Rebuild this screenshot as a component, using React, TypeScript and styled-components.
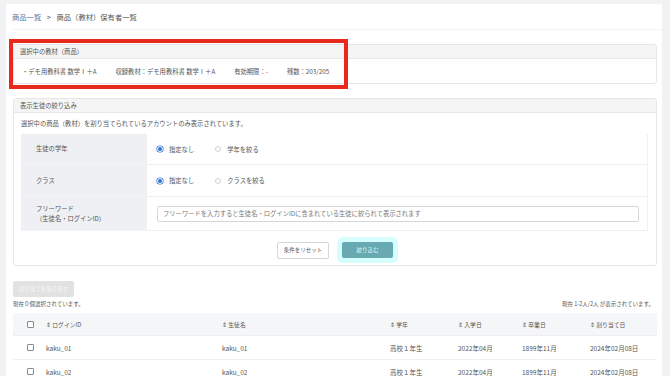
import styled, { createGlobalStyle } from 'styled-components';

const GlobalStyle = createGlobalStyle`
  *, *::before, *::after {
    box-sizing: border-box;
  }
  html, body {
    margin: 0;
    padding: 0;
    background: #f1f2f4;
    font-family: "Noto Sans CJK JP", "Noto Sans", sans-serif;
    color: #555;
    overflow: hidden;
  }
`;

const Page = styled.div`
  padding: 4px 8px 0 6px;
  height: 376px;
`;

const Panel = styled.div`
  background: #fff;
  height: 100%;
  padding: 0 5px 0 7px;
  position: relative;
`;

const Breadcrumb = styled.div`
  height: 26px;
  display: flex;
  align-items: center;
  gap: 4px;
  font-size: 7.3px;
  color: #555;
  margin: 0 -5px 0 -1px;
  border-bottom: 1px solid #f4f4f4;
`;

const Crumb = styled.span<{ link?: boolean }>`
  color: ${p => (p.link ? '#5a78a0' : '#555')};
`;

const Card = styled.div<{ top: number }>`
  margin-top: ${p => p.top}px;
  border: 1px solid #e6e6e6;
  border-radius: 3px;
  background: #fff;
  overflow: hidden;
`;

const CardHeader = styled.div`
  height: 14px;
  background: #f5f5f5;
  border-bottom: 1px solid #e8e8e8;
  display: flex;
  align-items: center;
  padding-left: 6px;
  font-size: 6.3px;
  color: #555;
`;

const InfoBody = styled.div`
  height: 24px;
  display: flex;
  align-items: center;
  gap: 19px;
  padding-left: 8px;
  font-size: 6.3px;
  color: #555;
`;

const Highlight = styled.div`
  position: absolute;
  left: 3px;
  top: 35px;
  width: 339px;
  height: 50px;
  border: 4px solid #e8291b;
  pointer-events: none;
`;

const Description = styled.div`
  height: 21px;
  display: flex;
  align-items: center;
  padding-left: 7px;
  font-size: 6.3px;
`;

const FormTable = styled.div`
  margin: 0 8px 0 7px;
  display: grid;
  grid-template-columns: 126px 1fr;
`;

const LabelCell = styled.div<{ h: number }>`
  height: ${p => p.h}px;
  background: #eef0f4;
  display: flex;
  flex-direction: column;
  justify-content: center;
  padding-left: 15px;
  font-size: 6.3px;
  color: #555;
  line-height: 1.5;
  border-bottom: 1px solid #f3f4f6;
`;

const ValueCell = styled.div<{ h: number }>`
  height: ${p => p.h}px;
  display: flex;
  align-items: center;
  padding-left: 10px;
  padding-right: 8px;
  border-bottom: 1px solid #eeeff2;
  border-right: 1px solid #f1f1f3;
  gap: 21px;
  font-size: 6.3px;
`;

const Radio = styled.label`
  display: flex;
  align-items: center;
  gap: 6px;
`;

const RadioDot = styled.span<{ checked?: boolean }>`
  width: 6px;
  height: 6px;
  border-radius: 50%;
  border: ${p => (p.checked ? '1.5px solid #fff' : '1px solid #cfd3d8')};
  background: ${p => (p.checked ? '#2f6ed1' : '#fff')};
  box-shadow: ${p => (p.checked ? '0 0 0 0.6px #2f6ed1' : 'none')};
`;

const TextInput = styled.div`
  flex: 1;
  height: 16px;
  border: 1px solid #d4d6da;
  border-radius: 2px;
  display: flex;
  align-items: center;
  padding-left: 5px;
  font-size: 6.3px;
  color: #777;
`;

const ButtonRow = styled.div`
  height: 34px;
  display: flex;
  align-items: center;
  justify-content: center;
  gap: 9px;
  padding-top: 4px;
`;

const ResetButton = styled.button`
  width: 52px;
  height: 17px;
  border: 1px solid #d6d6d6;
  border-radius: 2px;
  background: #fff;
  color: #555;
  font-family: inherit;
  font-size: 5.5px;
  padding: 0;
`;

const SubmitButton = styled.button`
  width: 51px;
  height: 16px;
  border: none;
  border-radius: 2px;
  background: #69a9b2;
  color: #dff;
  font-family: inherit;
  font-size: 5.5px;
  padding: 0;
  box-shadow: 0 0 0 5px #d6fefe;
  margin-left: 4px;
`;

const DisabledButton = styled.div`
  margin-top: 15px;
  width: 61px;
  height: 16px;
  background: #e2e2e2;
  border-radius: 2px;
  color: #f6f6f6;
  font-size: 5.5px;
  display: flex;
  align-items: center;
  justify-content: center;
`;

const CountRow = styled.div`
  height: 14px;
  display: flex;
  align-items: center;
  justify-content: space-between;
  font-size: 5.5px;
  color: #555;
  padding-right: 3px;
`;

const DataTable = styled.div`
  margin-top: 2px;
`;

const TableRow = styled.div<{ header?: boolean }>`
  display: grid;
  grid-template-columns: 33px 176px 168px 68px 64px 68px 1fr;
  align-items: center;
  height: ${p => (p.header ? 23 : 24)}px;
  background: ${p => (p.header ? '#f5f6f8' : '#fff')};
  border-bottom: 1px solid ${p => (p.header ? '#eceef1' : '#f0f0f0')};
  box-shadow: ${p => (p.header ? '0 1px 1px rgba(0,0,0,0.04)' : 'none')};
  font-size: ${p => (p.header ? 5.8 : 6.5)}px;
  color: #555;
`;

const Check = styled.span`
  justify-self: end;
  margin-right: 12px;
  width: 7px;
  height: 7px;
  border: 1px solid #8a8a8a;
  border-radius: 1px;
  background: #fff;
`;

const Cell = styled.span``;

const fields = [
  '・デモ用教科書 数学Ⅰ＋A',
  '収録教材：デモ用教科書 数学Ⅰ＋A',
  '有効期限：-',
  '残数：203/205',
];

const columns = ['ログインID', '生徒名', '学年', '入学日', '卒業日', '割り当て日'];

const students = [
  ['kaku_01', 'kaku_01', '高校１年生', '2022年04月', '1899年11月', '2024年02月08日'],
  ['kaku_02', 'kaku_02', '高校１年生', '2022年04月', '1899年11月', '2024年02月08日'],
];

export default function App() {
  return (
    <>
      <GlobalStyle />
      <Page>
        <Panel>
          <Breadcrumb>
            <Crumb link>商品一覧</Crumb>
            <Crumb>&nbsp;&gt;&nbsp;</Crumb>
            <Crumb>商品（教材）保有者一覧</Crumb>
          </Breadcrumb>

          <Card top={14}>
            <CardHeader>選択中の教材（商品）</CardHeader>
            <InfoBody>
              {fields.map(f => (
                <span key={f}>{f}</span>
              ))}
            </InfoBody>
          </Card>
          <Highlight />

          <Card top={14}>
            <CardHeader>表示生徒の絞り込み</CardHeader>
            <Description>選択中の商品（教材）を割り当てられているアカウントのみ表示されています。</Description>
            <FormTable>
              <LabelCell h={31}>生徒の学年</LabelCell>
              <ValueCell h={31}>
                <Radio><RadioDot checked />指定なし</Radio>
                <Radio><RadioDot />学年を絞る</Radio>
              </ValueCell>
              <LabelCell h={32}>クラス</LabelCell>
              <ValueCell h={32}>
                <Radio><RadioDot checked />指定なし</Radio>
                <Radio><RadioDot />クラスを絞る</Radio>
              </ValueCell>
              <LabelCell h={34}>
                <span>フリーワード</span>
                <span>（生徒名・ログインID）</span>
              </LabelCell>
              <ValueCell h={34}>
                <TextInput>フリーワードを入力すると生徒名・ログインIDに含まれている生徒に絞られて表示されます</TextInput>
              </ValueCell>
            </FormTable>
            <ButtonRow>
              <ResetButton>条件をリセット</ResetButton>
              <SubmitButton>絞り込む</SubmitButton>
            </ButtonRow>
          </Card>

          <DisabledButton>割り当てを取り消す</DisabledButton>
          <CountRow>
            <span>現在０個選択されています。</span>
            <span>現在 1-2人/2人 が表示されています。</span>
          </CountRow>

          <DataTable>
            <TableRow header>
              <Check />
              {columns.map(c => (
                <Cell key={c}>⇕ {c}</Cell>
              ))}
            </TableRow>
            {students.map(s => (
              <TableRow key={s[0]}>
                <Check />
                {s.map((v, i) => (
                  <Cell key={i}>{v}</Cell>
                ))}
              </TableRow>
            ))}
          </DataTable>
        </Panel>
      </Page>
    </>
  );
}
